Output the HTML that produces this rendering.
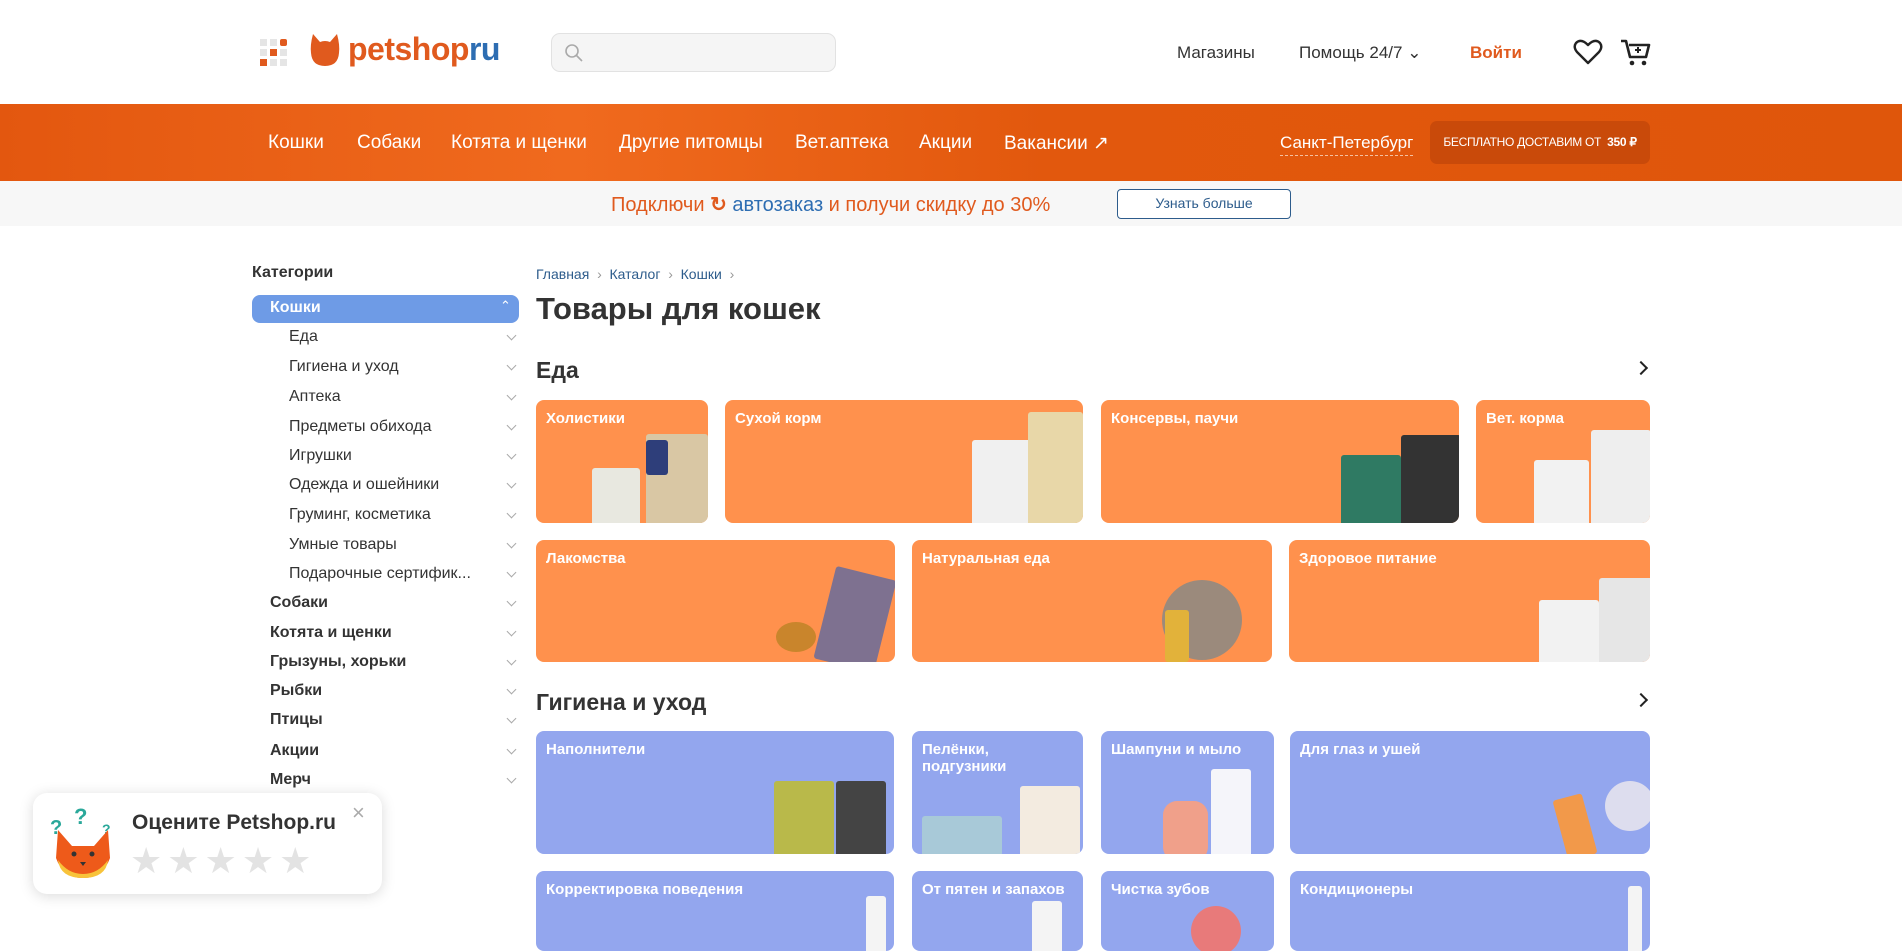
<!DOCTYPE html>
<html><head><meta charset="utf-8"><style>
*{box-sizing:border-box;margin:0;padding:0}
body{width:1902px;height:927px;overflow:hidden;background:#fff;font-family:"Liberation Sans",sans-serif;color:#333;position:relative}
.a{position:absolute}
.nav a{position:absolute;top:132px;color:#fff;font-size:19px;white-space:nowrap}
.side div{position:absolute;font-size:16px;color:#333;white-space:nowrap}
.chev{position:absolute;left:508px;width:7px;height:7px;border-right:1.3px solid #aaa;border-bottom:1.3px solid #aaa;transform:rotate(45deg)}
.card{position:absolute;border-radius:8px;background:#ff914d;overflow:hidden}
.card span{position:absolute;left:10px;top:10px;color:#fff;font-weight:bold;font-size:15px;line-height:17px}
.b{background:#93a6ee}
.pk{position:absolute;border-radius:3px}
</style></head><body>
<!-- header -->
<div class="a" style="left:260px;top:39px;width:28px;height:28px">
<div class="a" style="left:0;top:0;width:7px;height:7px;background:#e5e5e5"></div><div class="a" style="left:10px;top:0;width:7px;height:7px;background:#e5e5e5"></div><div class="a" style="left:20px;top:0;width:7px;height:7px;background:#e05a1e;border-radius:2px"></div>
<div class="a" style="left:0;top:10px;width:7px;height:7px;background:#e5e5e5"></div><div class="a" style="left:10px;top:10px;width:7px;height:7px;background:#e05a1e"></div><div class="a" style="left:20px;top:10px;width:7px;height:7px;background:#e5e5e5"></div>
<div class="a" style="left:0;top:20px;width:7px;height:7px;background:#e05a1e"></div><div class="a" style="left:10px;top:20px;width:7px;height:7px;background:#e5e5e5"></div><div class="a" style="left:20px;top:20px;width:7px;height:7px;background:#e5e5e5"></div>
</div>
<svg class="a" style="left:310px;top:33px" width="30" height="34" viewBox="0 0 30 34"><path d="M3 1 L10 9 Q15 7 20 9 L27 1 Q30 12 29 20 Q28 33 15 33 Q2 33 1 20 Q0 12 3 1Z" fill="#e05a1e"/></svg>
<div class="a" style="left:348px;top:31px;font-size:32px;font-weight:bold;color:#e05a1e;letter-spacing:-0.5px">petshop<span style="color:#2d6db2">ru</span></div>
<div class="a" style="left:551px;top:33px;width:285px;height:39px;background:#f5f5f5;border:1px solid #e2e2e2;border-radius:9px"></div>
<svg class="a" style="left:564px;top:43px" width="20" height="20"><circle cx="8" cy="8" r="6" fill="none" stroke="#aaa" stroke-width="1.6"/><line x1="12.5" y1="12.5" x2="18" y2="18" stroke="#aaa" stroke-width="1.6"/></svg>
<div class="a" style="left:1177px;top:43px;font-size:17px;color:#333">Магазины</div>
<div class="a" style="left:1299px;top:43px;font-size:17px;color:#333">Помощь 24/7 ⌄</div>
<div class="a" style="left:1470px;top:43px;font-size:17px;color:#e05a1e;font-weight:bold">Войти</div>
<svg class="a" style="left:1573px;top:38px" width="30" height="28" viewBox="0 0 30 28"><path d="M15 25 L4 14 Q0 9 3 5 Q8 0 15 7 Q22 0 27 5 Q30 9 26 14Z" fill="none" stroke="#222" stroke-width="2.4" stroke-linejoin="round"/></svg>
<svg class="a" style="left:1620px;top:38px" width="32" height="30" viewBox="0 0 32 30"><path d="M1 3 H6 L10 19 H26 L29 7 H9" fill="none" stroke="#222" stroke-width="2.6" stroke-linejoin="round"/><circle cx="12" cy="25" r="2.3" fill="#222"/><circle cx="24" cy="25" r="2.3" fill="#222"/><path d="M18 9 V15 M15 12 H21" stroke="#222" stroke-width="2"/></svg>
<!-- nav -->
<div class="a" style="left:0;top:104px;width:1902px;height:77px;background:linear-gradient(90deg,#e3570f,#f06a1e 30%,#e2580d 55%,#df560b)"></div>
<div class="nav"><a style="left:268px">Кошки</a><a style="left:357px">Собаки</a><a style="left:451px">Котята и щенки</a><a style="left:619px">Другие питомцы</a><a style="left:795px">Вет.аптека</a><a style="left:919px">Акции</a><a style="left:1004px">Вакансии ↗</a>
<a style="left:1280px;top:133px;font-size:17px;border-bottom:1px dashed #f5c0a0;padding-bottom:2px">Санкт-Петербург</a></div>
<div class="a" style="left:1430px;top:121px;width:220px;height:43px;background:#c94a0a;border-radius:7px;color:#fff;font-size:12px;line-height:43px;text-align:center;letter-spacing:-0.3px">БЕСПЛАТНО ДОСТАВИМ ОТ &nbsp;<b>350 ₽</b></div>
<!-- promo -->
<div class="a" style="left:0;top:181px;width:1902px;height:45px;background:#f7f7f7"></div>
<div class="a" style="left:611px;top:192px;font-size:20px;color:#e05a1e;white-space:nowrap">Подключи <span style="font-weight:bold">↻</span> <span style="color:#2d6db2">автозаказ</span> и получи скидку до 30%</div>
<div class="a" style="left:1117px;top:189px;width:174px;height:30px;border:1.5px solid #2d5c8c;border-radius:4px;background:#fff;color:#2d5c8c;font-size:14px;text-align:center;line-height:27px">Узнать больше</div>
<!-- sidebar -->
<div class="side">
<div style="left:252px;top:264px;font-weight:bold">Категории</div>
<div style="left:252px;top:295px;width:267px;height:28px;background:#6e9be6;border-radius:8px"></div>
<div style="left:270px;top:299px;color:#fff;font-weight:bold">Кошки</div>
<div style="left:500px;top:298px;color:#fff;font-size:13px">⌃</div>
<div style="left:289px;top:328px">Еда</div>
<div style="left:289px;top:358px">Гигиена и уход</div>
<div style="left:289px;top:388px">Аптека</div>
<div style="left:289px;top:418px">Предметы обихода</div>
<div style="left:289px;top:447px">Игрушки</div>
<div style="left:289px;top:476px">Одежда и ошейники</div>
<div style="left:289px;top:506px">Груминг, косметика</div>
<div style="left:289px;top:536px">Умные товары</div>
<div style="left:289px;top:565px">Подарочные сертифик...</div>
<div style="left:270px;top:594px;font-weight:bold">Собаки</div>
<div style="left:270px;top:624px;font-weight:bold">Котята и щенки</div>
<div style="left:270px;top:653px;font-weight:bold">Грызуны, хорьки</div>
<div style="left:270px;top:682px;font-weight:bold">Рыбки</div>
<div style="left:270px;top:711px;font-weight:bold">Птицы</div>
<div style="left:270px;top:742px;font-weight:bold">Акции</div>
<div style="left:270px;top:771px;font-weight:bold">Мерч</div>
</div>
<div class="chev" style="top:332px"></div><div class="chev" style="top:362px"></div><div class="chev" style="top:392px"></div><div class="chev" style="top:422px"></div><div class="chev" style="top:451px"></div><div class="chev" style="top:480px"></div><div class="chev" style="top:510px"></div><div class="chev" style="top:540px"></div><div class="chev" style="top:569px"></div><div class="chev" style="top:598px"></div><div class="chev" style="top:628px"></div><div class="chev" style="top:657px"></div><div class="chev" style="top:686px"></div><div class="chev" style="top:715px"></div><div class="chev" style="top:746px"></div><div class="chev" style="top:775px"></div>
<!-- main -->
<div class="a" style="left:536px;top:266px;font-size:14px;color:#2d5c8c">Главная &nbsp;<span style="color:#999">›</span>&nbsp; Каталог &nbsp;<span style="color:#999">›</span>&nbsp; Кошки &nbsp;<span style="color:#999">›</span></div>
<div class="a" style="left:536px;top:291px;font-size:31px;font-weight:bold;color:#333">Товары для кошек</div>
<div class="a" style="left:536px;top:357px;font-size:23px;font-weight:bold">Еда</div>
<div class="a" style="left:1636px;top:363px;width:10px;height:10px;border-top:2.5px solid #222;border-right:2.5px solid #222;transform:rotate(45deg)"></div>
<div class="a" style="left:536px;top:689px;font-size:23px;font-weight:bold">Гигиена и уход</div>
<div class="a" style="left:1636px;top:695px;width:10px;height:10px;border-top:2.5px solid #222;border-right:2.5px solid #222;transform:rotate(45deg)"></div>

<div class="card" style="left:536px;top:400px;width:172px;height:123px"><span>Холистики</span><div class="pk" style="left:56px;top:68px;width:48px;height:60px;background:#e8e8e0"></div><div class="pk" style="left:110px;top:34px;width:62px;height:95px;background:#d9c7a4"></div><div class="pk" style="left:110px;top:40px;width:22px;height:35px;background:#2e3e7a"></div></div>
<div class="card" style="left:725px;top:400px;width:358px;height:123px"><span>Сухой корм</span><div class="pk" style="left:247px;top:40px;width:60px;height:90px;background:#f0f0f0"></div><div class="pk" style="left:303px;top:12px;width:55px;height:115px;background:#e8d7a8"></div></div>
<div class="card" style="left:1101px;top:400px;width:358px;height:123px"><span>Консервы, паучи</span><div class="pk" style="left:240px;top:55px;width:60px;height:75px;background:#2f7a63"></div><div class="pk" style="left:300px;top:35px;width:60px;height:95px;background:#333"></div></div>
<div class="card" style="left:1476px;top:400px;width:174px;height:123px"><span>Вет. корма</span><div class="pk" style="left:58px;top:60px;width:55px;height:70px;background:#f2f2f2"></div><div class="pk" style="left:115px;top:30px;width:60px;height:100px;background:#eee"></div></div>
<div class="card" style="left:536px;top:540px;width:359px;height:122px"><span>Лакомства</span><div class="pk" style="left:288px;top:32px;width:62px;height:95px;background:#7e7190;transform:rotate(14deg)"></div><div class="pk" style="left:240px;top:82px;width:40px;height:30px;background:#c9852c;border-radius:50%"></div></div>
<div class="card" style="left:912px;top:540px;width:360px;height:122px"><span>Натуральная еда</span><div class="pk" style="left:250px;top:40px;width:80px;height:80px;border-radius:50%;background:#9b8a7c"></div><div class="pk" style="left:253px;top:70px;width:24px;height:52px;background:#e2b23a"></div></div>
<div class="card" style="left:1289px;top:540px;width:361px;height:122px"><span>Здоровое питание</span><div class="pk" style="left:250px;top:60px;width:60px;height:70px;background:#f2f2f2"></div><div class="pk" style="left:310px;top:38px;width:55px;height:90px;background:#e6e6e6"></div></div>

<div class="card b" style="left:536px;top:731px;width:358px;height:123px"><span>Наполнители</span><div class="pk" style="left:238px;top:50px;width:60px;height:80px;background:#b9b94a"></div><div class="pk" style="left:300px;top:50px;width:50px;height:80px;background:#444"></div></div>
<div class="card b" style="left:912px;top:731px;width:171px;height:123px"><span>Пелёнки,<br>подгузники</span><div class="pk" style="left:10px;top:85px;width:80px;height:40px;background:#a8c9d8"></div><div class="pk" style="left:108px;top:55px;width:60px;height:75px;background:#f3ebe0"></div></div>
<div class="card b" style="left:1101px;top:731px;width:173px;height:123px"><span>Шампуни и мыло</span><div class="pk" style="left:62px;top:70px;width:45px;height:60px;background:#f0a08a;border-radius:14px"></div><div class="pk" style="left:110px;top:38px;width:40px;height:90px;background:#f5f5fa"></div></div>
<div class="card b" style="left:1290px;top:731px;width:360px;height:123px"><span>Для глаз и ушей</span><div class="pk" style="left:270px;top:65px;width:30px;height:62px;background:#f2994a;transform:rotate(-15deg)"></div><div class="pk" style="left:315px;top:50px;width:50px;height:50px;border-radius:50%;background:#dde"></div></div>

<div class="card b" style="left:536px;top:871px;width:358px;height:80px"><span>Корректировка поведения</span><div class="pk" style="left:330px;top:25px;width:20px;height:60px;background:#f4f4f4"></div></div>
<div class="card b" style="left:912px;top:871px;width:171px;height:80px"><span>От пятен и запахов</span><div class="pk" style="left:120px;top:30px;width:30px;height:60px;background:#f4f4f4"></div></div>
<div class="card b" style="left:1101px;top:871px;width:173px;height:80px"><span>Чистка зубов</span><div class="pk" style="left:90px;top:35px;width:50px;height:50px;background:#e87a7a;border-radius:50%"></div></div>
<div class="card b" style="left:1290px;top:871px;width:360px;height:80px"><span>Кондиционеры</span><div class="pk" style="left:338px;top:15px;width:14px;height:70px;background:#f4f4f4"></div></div>

<!-- rating popup -->
<div class="a" style="left:33px;top:793px;width:349px;height:101px;background:#fff;border-radius:14px;box-shadow:0 2px 14px rgba(0,0,0,0.15)"></div>
<svg class="a" style="left:48px;top:808px" width="70" height="72" viewBox="0 0 70 72"><text x="2" y="26" font-size="20" font-weight="bold" fill="#2aa89a" font-family="Liberation Sans">?</text><text x="26" y="16" font-size="22" font-weight="bold" fill="#2aa89a" font-family="Liberation Sans">?</text><text x="54" y="26" font-size="14" font-weight="bold" fill="#2aa89a" font-family="Liberation Sans">?</text><path d="M10 22 L24 38 L46 38 L60 22 L62 50 Q55 70 35 70 Q15 70 8 50Z" fill="#ee5a1a"/><path d="M10 52 Q20 66 35 66 Q50 66 60 52 Q58 70 35 70 Q12 70 10 52Z" fill="#f8c33a"/><circle cx="26" cy="46" r="2.5" fill="#333"/><circle cx="44" cy="46" r="2.5" fill="#333"/><path d="M32 54 L38 54 L35 58Z" fill="#333"/></svg>
<div class="a" style="left:132px;top:811px;font-size:21px;font-weight:bold;color:#333">Оцените Petshop.ru</div>
<div class="a" style="left:352px;top:800px;font-size:22px;color:#aaa">×</div>
<div class="a" style="left:130px;top:840px;font-size:36px;color:#e3e3e3;letter-spacing:5px">★★★★★</div>
</body></html>
